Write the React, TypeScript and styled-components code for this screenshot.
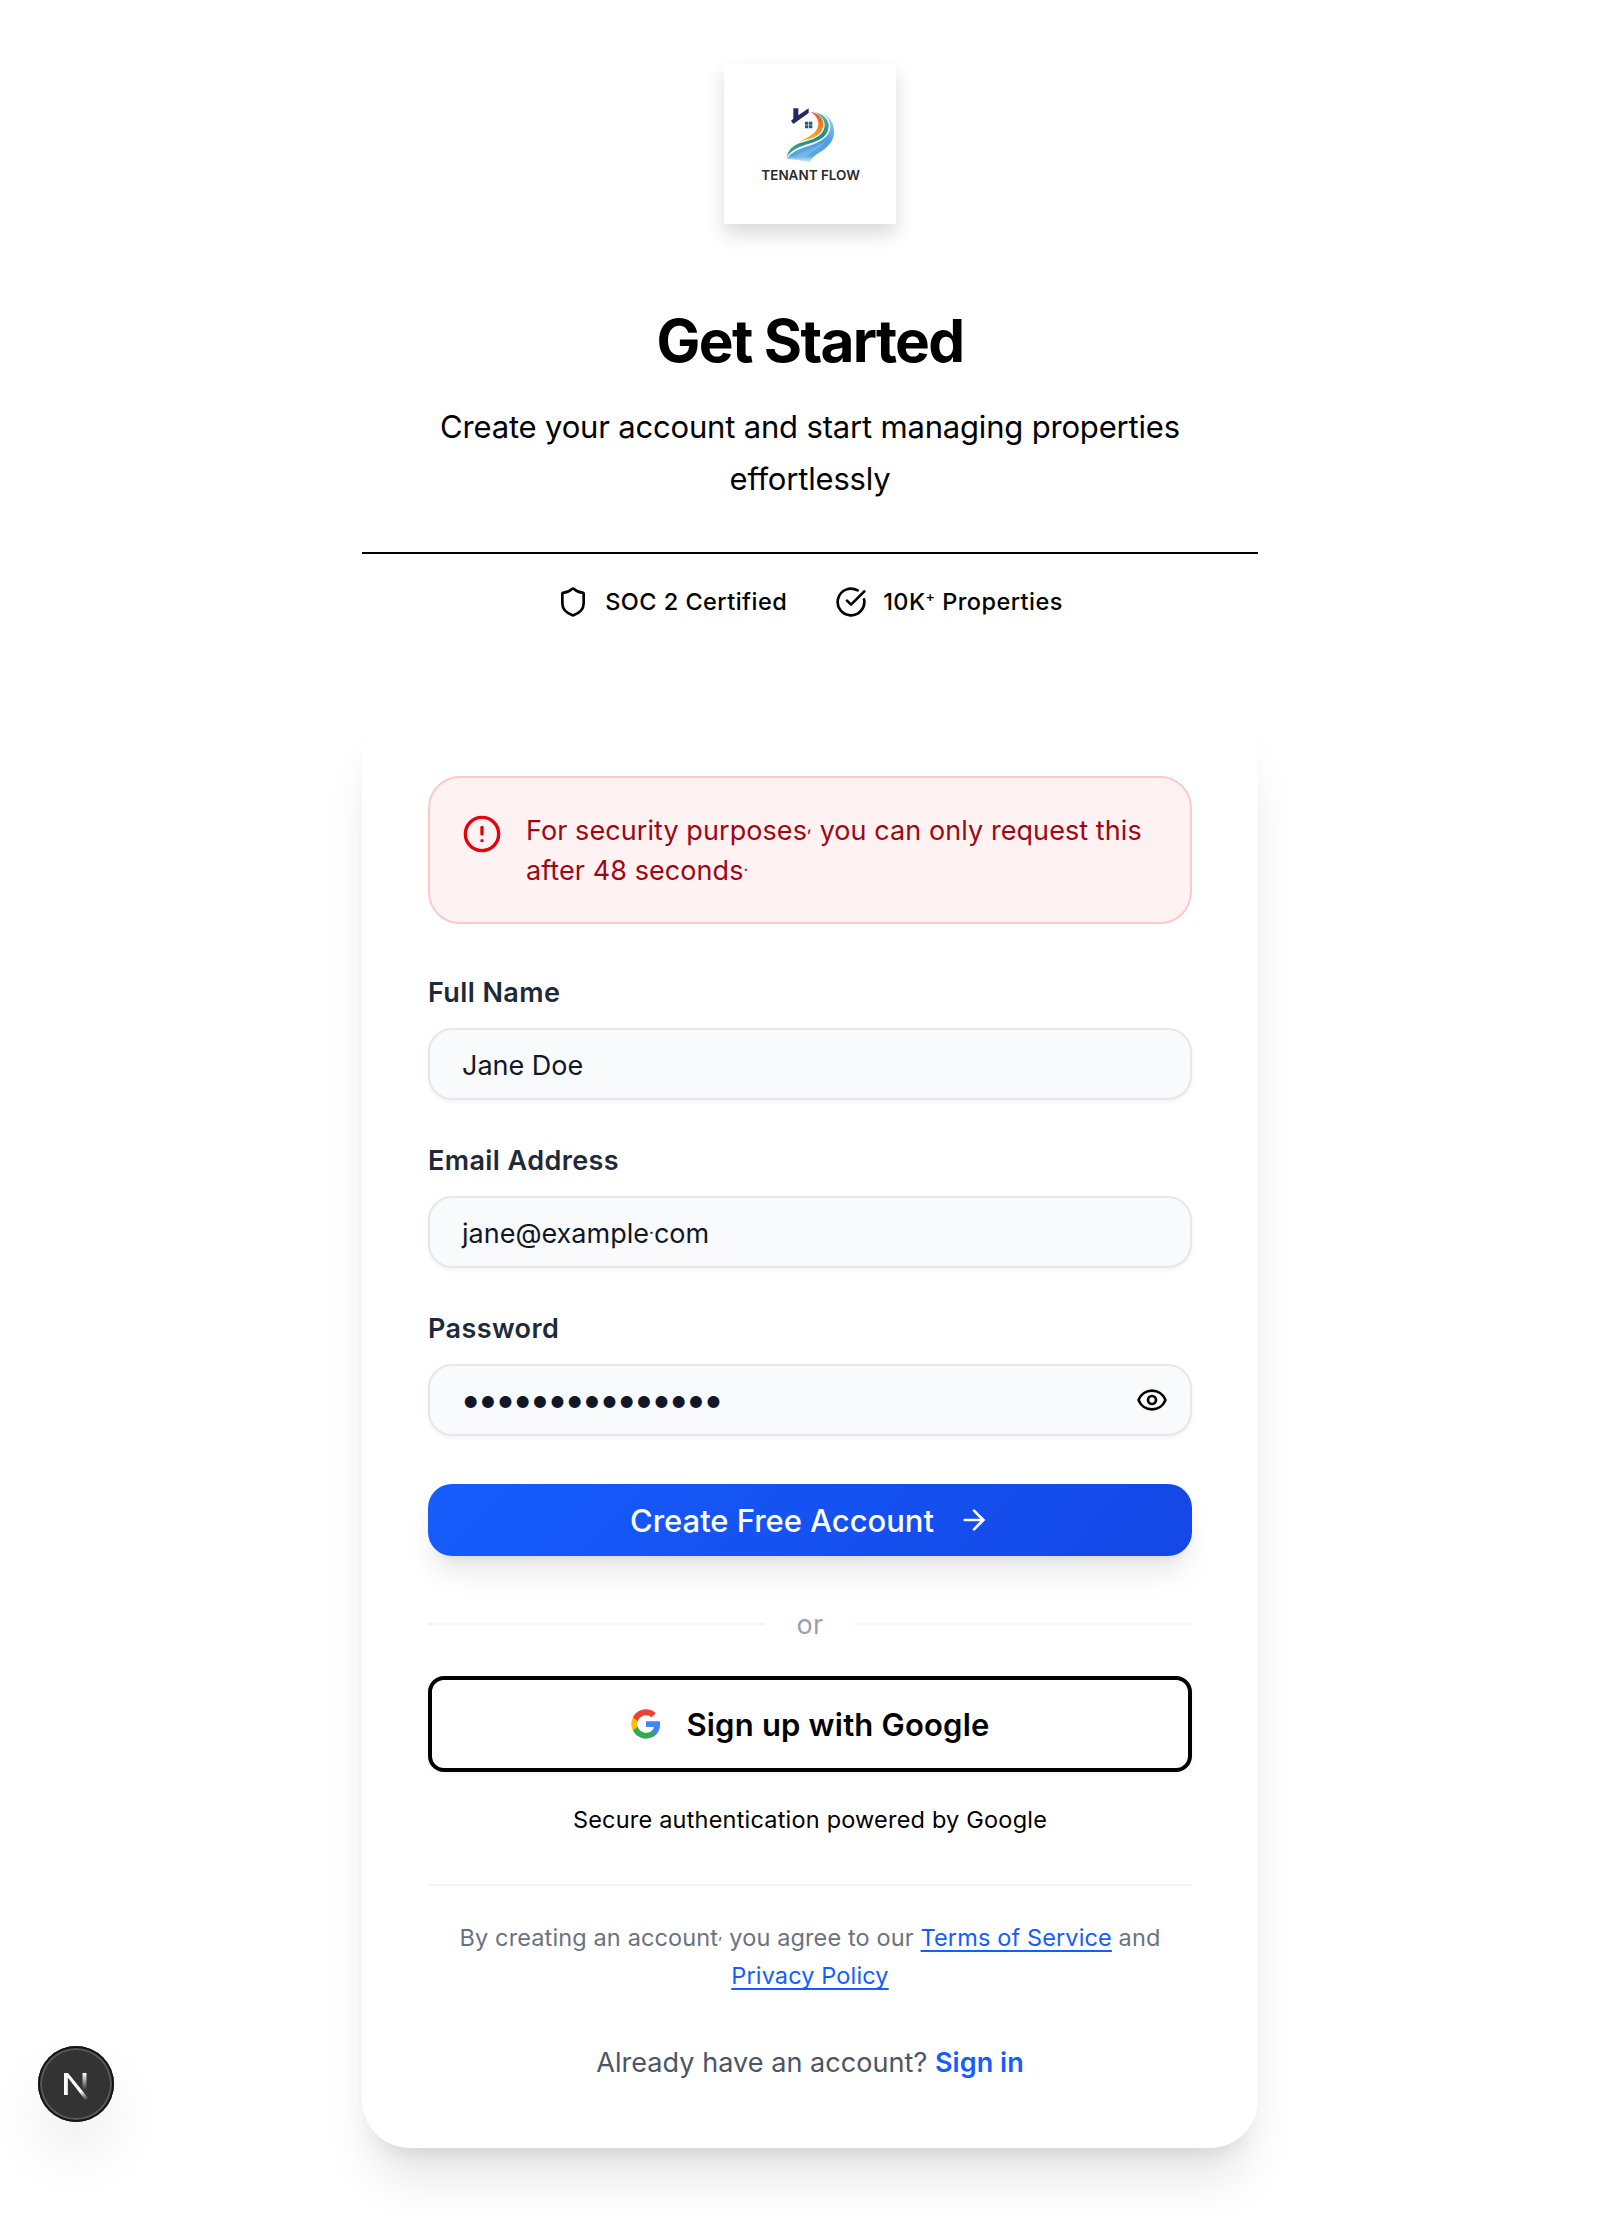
import React from 'react';
import styled, { createGlobalStyle } from 'styled-components';
import { ArrowRight, CircleAlert, CircleCheckBig, Eye, Shield } from 'lucide-react';

const GlobalStyle = createGlobalStyle`
  *, *::before, *::after { box-sizing: border-box; }
  body {
    margin: 0;
    background: #ffffff;
    color: #000000;
    font-family: Inter, "Liberation Sans", sans-serif;
    overflow: hidden;
  }
  p, h1 { margin: 0; }
`;

const Page = styled.main`
  height: 2216px;
  display: flex;
  flex-direction: column;
  align-items: center;
  padding-top: 64px;
`;

const LogoCard = styled.div`
  width: 172px;
  height: 160px;
  background: #ffffff;
  box-shadow: 0 10px 18px rgba(0, 0, 0, 0.15);
  svg { display: block; }
`;

const Title = styled.h1`
  margin-top: 79px;
  font-size: 58.5px;
  line-height: 75px;
  font-weight: 700;
  letter-spacing: -1.7px;
`;

const Subtitle = styled.p`
  width: 896px;
  margin-top: 23px;
  padding: 0 60px;
  text-align: center;
  font-size: 31px;
  line-height: 52px;
  letter-spacing: -0.18px;
`;

const TrustRow = styled.div`
  width: 896px;
  margin-top: 47px;
  padding-top: 30px;
  border-top: 2px solid #000000;
  display: flex;
  justify-content: center;
  gap: 48px;
`;

const TrustItem = styled.div`
  display: flex;
  align-items: center;
  gap: 16px;
  height: 36px;
  font-size: 23.5px;
  font-weight: 500;
  letter-spacing: 0.45px;
`;

const TrustText = styled.span`
  margin-top: -2px;
`;

const Card = styled.section`
  width: 896px;
  height: 1438px;
  margin-top: 90px;
  padding: 66px;
  border-radius: 48px;
  background: #ffffff;
  box-shadow: 0 40px 50px -10px rgba(0, 0, 0, 0.1), 0 16px 20px -12px rgba(0, 0, 0, 0.1);
`;

const Alert = styled.div`
  display: flex;
  gap: 24px;
  height: 148px;
  padding: 32px;
  border: 2px solid #ffc9c9;
  border-radius: 32px;
  background: #fef2f2;
  color: #9f0712;
  font-size: 27px;
  line-height: 40px;
  letter-spacing: 0.07px;
  svg { flex: none; margin-top: 4px; color: #e7000b; }
  p { padding-top: 1px; }
`;

const Fields = styled.div`
  display: flex;
  flex-direction: column;
  gap: 40px;
  margin-top: 48px;
`;

const Field = styled.div`
  display: flex;
  flex-direction: column;
  gap: 16px;
`;

const Label = styled.div`
  height: 40px;
  padding-top: 1px;
  font-size: 27px;
  line-height: 40px;
  font-weight: 600;
  letter-spacing: 0.4px;
  color: #1e2939;
`;

const Box = styled.div`
  display: flex;
  align-items: center;
  justify-content: space-between;
  height: 72px;
  padding: 0 22px 0 32px;
  border: 2px solid #e5e7eb;
  border-radius: 24px;
  background: #f9fafb;
  color: #101828;
  font-size: 27px;
  box-shadow: 0 2px 4px rgba(0, 0, 0, 0.05);
  svg { color: #000000; }
`;

const Value = styled.span`
  padding-top: 2px;
`;

const Mask = styled.span`
  margin-top: -2px;
  margin-left: -2px;
  font-size: 38px;
  line-height: 40px;
  letter-spacing: -4.04px;
`;

const Raised = styled.span`
  position: relative;
  top: -0.55em;
  font-size: 0.6em;
  font-weight: 500;
  line-height: 0;
`;

const Submit = styled.div`
  display: flex;
  align-items: center;
  justify-content: center;
  gap: 24px;
  height: 72px;
  margin-top: 48px;
  border-radius: 24px;
  background: linear-gradient(135deg, #155dfc, #1447e6);
  color: #ffffff;
  font-size: 31px;
  font-weight: 500;
  letter-spacing: -0.04px;
  box-shadow: 0 20px 30px -6px rgba(0, 0, 0, 0.1), 0 8px 12px -8px rgba(0, 0, 0, 0.1);
`;

const OrRow = styled.div`
  display: flex;
  align-items: center;
  gap: 32px;
  height: 40px;
  margin-top: 48px;
  color: #99a1af;
  font-size: 27px;
  letter-spacing: 0.3px;
  &::before, &::after { content: ''; flex: 1; height: 2px; background: #f3f4f6; }
`;

const GoogleButton = styled.div`
  display: flex;
  align-items: center;
  justify-content: center;
  gap: 24px;
  height: 96px;
  margin-top: 32px;
  border: 4px solid #000000;
  border-radius: 16px;
  font-size: 31px;
  font-weight: 600;
  letter-spacing: 0.2px;
  box-shadow: 0 2px 4px rgba(0, 0, 0, 0.05);
`;

const Secure = styled.p`
  margin-top: 32px;
  text-align: center;
  font-size: 23.5px;
  line-height: 32px;
  letter-spacing: 0.2px;
`;

const Terms = styled.p`
  margin-top: 48px;
  padding-top: 33px;
  border-top: 2px solid #f3f4f6;
  text-align: center;
  font-size: 23.5px;
  line-height: 38.4px;
  letter-spacing: 0.13px;
  color: #6a7282;
`;

const TermsLink = styled.a`
  color: #155dfc;
  text-decoration: underline;
  text-underline-offset: 4px;
  text-decoration-thickness: 2px;
`;

const SignIn = styled.p`
  margin-top: 47px;
  text-align: center;
  font-size: 27px;
  line-height: 40px;
  letter-spacing: 0.06px;
  color: #4a5565;
`;

const SignInLink = styled.a`
  color: #155dfc;
  font-weight: 600;
`;

const DevBadge = styled.div`
  position: fixed;
  left: 38px;
  top: 2046px;
  width: 76px;
  height: 76px;
  border-radius: 50%;
  background: #333333;
  box-shadow: inset 0 0 0 2px #141414, inset 0 0 0 4px #575757, 0 32px 64px -8px rgba(0, 0, 0, 0.12);
  svg { display: block; }
`;

function TenantFlowLogo() {
  return (
    <svg width="172" height="160" viewBox="72 72 516 480">
      <defs>
        <linearGradient id="tf-orange" x1="0" y1="0" x2="0" y2="1">
          <stop offset="0" stopColor="#f0502a" />
          <stop offset="0.5" stopColor="#f58220" />
          <stop offset="1" stopColor="#fdb827" />
        </linearGradient>
        <linearGradient id="tf-green" x1="0" y1="0" x2="0" y2="1">
          <stop offset="0" stopColor="#5cb8a0" />
          <stop offset="0.55" stopColor="#1f8a80" />
          <stop offset="1" stopColor="#4fb08c" />
        </linearGradient>
        <linearGradient id="tf-blue" x1="0" y1="0" x2="0" y2="1">
          <stop offset="0" stopColor="#9fd2f2" />
          <stop offset="0.55" stopColor="#4f9fdf" />
          <stop offset="0.85" stopColor="#5aa6e2" />
          <stop offset="1" stopColor="#ffffff" />
        </linearGradient>
      </defs>
      <path d="M280 205H295V226L326 205V219L280 252L273 242L280 236Z" fill="#232a63" />
      <path d="M315 245H325V254H315ZM327 245H337V254H327ZM315 256H325V265H315ZM327 256H337V265H327Z" fill="#235b6c" />
      <path d="M364 220C390 228 402 252 402 276C402 304 382 323 360 337C345 347 333 354 332 370C312 362 285 358 260 356C275 334 300 326 328 317C362 306 389 290 391 262C392 244 382 230 364 220Z" fill="url(#tf-blue)" />
      <path d="M285 350C310 328 350 326 376 304C358 330 330 332 318 356Z" fill="#8cc6ef" opacity="0.5" />
      <path d="M343 216C372 222 388 240 386 262C383 290 358 303 325 312C298 320 272 330 260 353C263 330 280 316 300 309C330 300 352 296 366 278C382 256 374 232 343 216Z" fill="url(#tf-green)" />
      <path d="M333 216C354 219 370 234 370 254C369 276 352 290 328 297C315 300 304 303 295 307C312 297 330 290 343 278C360 262 362 236 333 216Z" fill="url(#tf-orange)" />
      <text x="184" y="419" fontSize="39" fontWeight="600" fill="#2b2b2b" textLength="296" lengthAdjust="spacingAndGlyphs">TENANT FLOW</text>
    </svg>
  );
}

function GoogleLogo() {
  return (
    <svg width="32" height="32" viewBox="0 0 24 24">
      <path fill="#4285F4" d="M22.56 12.25c0-.78-.07-1.53-.2-2.25H12v4.26h5.92c-.26 1.37-1.04 2.53-2.21 3.31v2.77h3.57c2.08-1.92 3.28-4.74 3.28-8.09z" />
      <path fill="#34A853" d="M12 23c2.97 0 5.46-.98 7.28-2.66l-3.57-2.77c-.98.66-2.23 1.06-3.71 1.06-2.86 0-5.29-1.93-6.16-4.53H2.18v2.84C3.99 20.53 7.7 23 12 23z" />
      <path fill="#FBBC05" d="M5.84 14.09c-.22-.66-.35-1.36-.35-2.09s.13-1.43.35-2.09V7.07H2.18C1.43 8.55 1 10.22 1 12s.43 3.45 1.18 4.93l2.85-2.22.81-.62z" />
      <path fill="#EA4335" d="M12 5.38c1.62 0 3.06.56 4.21 1.64l3.15-3.15C17.45 2.09 14.97 1 12 1 7.7 1 3.99 3.47 2.18 7.07l3.66 2.84c.87-2.6 3.3-4.53 6.16-4.53z" />
    </svg>
  );
}

function DevMark() {
  return (
    <svg width="76" height="76" viewBox="0 0 76 76" fill="none">
      <defs>
        <linearGradient id="n-diag" gradientUnits="userSpaceOnUse" x1="38" y1="38" x2="49" y2="54">
          <stop offset="0" stopColor="#ffffff" />
          <stop offset="0.45" stopColor="#ffffff" />
          <stop offset="1" stopColor="#ffffff" stopOpacity="0" />
        </linearGradient>
        <linearGradient id="n-stem" gradientUnits="userSpaceOnUse" x1="0" y1="27" x2="0" y2="44">
          <stop offset="0" stopColor="#ffffff" />
          <stop offset="1" stopColor="#ffffff" stopOpacity="0" />
        </linearGradient>
      </defs>
      <path d="M26 27H30L51 53L48 55L29.8 31.5V49H26Z" fill="url(#n-diag)" />
      <path d="M44.5 27H48.5V44H44.5Z" fill="url(#n-stem)" />
    </svg>
  );
}

export default function App() {
  return (
    <>
      <GlobalStyle />
      <Page>
        <LogoCard><TenantFlowLogo /></LogoCard>
        <Title>Get Started</Title>
        <Subtitle>Create your account and start managing properties effortlessly</Subtitle>
        <TrustRow>
          <TrustItem><Shield size={32} /><TrustText>SOC 2 Certified</TrustText></TrustItem>
          <TrustItem><CircleCheckBig size={32} /><TrustText>10K<Raised>+</Raised> Properties</TrustText></TrustItem>
        </TrustRow>
        <Card>
          <Alert>
            <CircleAlert size={40} />
            <p>For security purposes<Raised>,</Raised> you can only request this after 48 seconds<Raised>.</Raised></p>
          </Alert>
          <Fields>
            <Field><Label>Full Name</Label><Box><Value>Jane Doe</Value></Box></Field>
            <Field><Label>Email Address</Label><Box><Value>jane@example<Raised>.</Raised>com</Value></Box></Field>
            <Field><Label>Password</Label><Box><Mask>•••••••••••••••</Mask><Eye size={32} /></Box></Field>
          </Fields>
          <Submit>Create Free Account<ArrowRight size={32} /></Submit>
          <OrRow>or</OrRow>
          <GoogleButton><GoogleLogo />Sign up with Google</GoogleButton>
          <Secure>Secure authentication powered by Google</Secure>
          <Terms>
            By creating an account<Raised>,</Raised> you agree to our <TermsLink>Terms of Service</TermsLink> and <TermsLink>Privacy Policy</TermsLink>
          </Terms>
          <SignIn>Already have an account? <SignInLink>Sign in</SignInLink></SignIn>
        </Card>
      </Page>
      <DevBadge><DevMark /></DevBadge>
    </>
  );
}
